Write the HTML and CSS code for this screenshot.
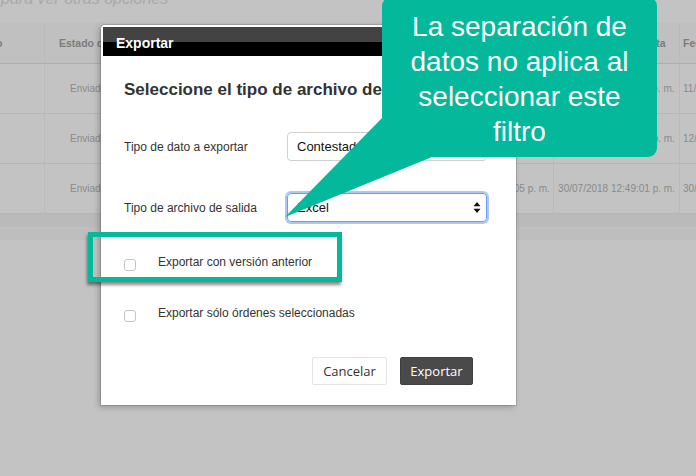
FILE: index.html
```html
<!DOCTYPE html>
<html lang="es">
<head>
<meta charset="utf-8">
<title>Exportar</title>
<link rel="stylesheet" href="styles.css">
</head>
<body>
<div class="page">
  <p class="hint">para ver otras opciones</p>
  <div class="grid">
    <div class="th c1"><span class="cut">o</span></div>
    <div class="th c2">Estado de la orden</div>
    <div class="th c3">Fecha de envío</div>
    <div class="th c4">Fecha de respuesta</div>
    <div class="th c5">Fecha</div>

    <div class="td c1"></div>
    <div class="td c2">Enviado</div>
    <div class="td c3">30/07/2018 11:02:15 p. m.</div>
    <div class="td c4">30/07/2018 11:05:40 p. m.</div>
    <div class="td c5">11/08/2018</div>

    <div class="td c1"></div>
    <div class="td c2">Enviado</div>
    <div class="td c3">30/07/2018 12:10:22 p. m.</div>
    <div class="td c4">30/07/2018 12:14:08 p. m.</div>
    <div class="td c5">12/08/2018</div>

    <div class="td c1"></div>
    <div class="td c2">Enviado</div>
    <div class="td c3">30/07/2018 12:49:05 p. m.</div>
    <div class="td c4">30/07/2018 12:49:01 p. m.</div>
    <div class="td c5">30/08/2018</div>
  </div>
  <div class="band"></div>
</div>

<div class="modal">
  <div class="modal-head">Exportar</div>
  <div class="modal-body">
    <h2 class="modal-title">Seleccione el tipo de archivo de exportación</h2>
    <div class="field first">
      <span class="field-label">Tipo de dato a exportar</span>
      <div class="select"><span>Contestadas</span></div>
    </div>
    <div class="field">
      <span class="field-label">Tipo de archivo de salida</span>
      <div class="select focus"><span>Excel</span>
        <svg class="arrows" width="8" height="11" viewBox="0 0 8 11"><path d="M4 0 L7.5 4.3 H0.5 Z M4 11 L7.5 6.7 H0.5 Z" fill="#111"/></svg>
      </div>
    </div>
    <div class="check first">
      <span class="box"></span>
      <span class="check-label">Exportar con versión anterior</span>
    </div>
    <div class="check">
      <span class="box"></span>
      <span class="check-label">Exportar sólo órdenes seleccionadas</span>
    </div>
    <div class="actions">
      <button class="btn btn-light">Cancelar</button>
      <button class="btn btn-dark">Exportar</button>
    </div>
  </div>
</div>

<svg class="tail" width="696" height="476" viewBox="0 0 696 476"><polygon points="384,116 285,217 432,157 452,128" fill="#03b89b"/></svg>
<div class="callout">La separación de<br>datos no aplica al<br>seleccionar este<br>filtro</div>
<div class="mark"></div>
</body>
</html>
```

FILE: styles.css
```css
html, body {
  margin: 0;
  padding: 0;
}
body {
  width: 696px;
  height: 476px;
  overflow: hidden;
  background: #c3c3c3;
  font-family: "Liberation Sans", Arial, sans-serif;
  position: relative;
}
.page {
  width: 696px;
}
.hint {
  margin: -9px 0 0;
  height: 32px;
  line-height: 16px;
  font-size: 16px;
  font-style: italic;
  color: #a9a9a9;
  padding-left: 1px;
}
.grid {
  display: grid;
  grid-template-columns: 45px 385px 124px 126px 80px;
  grid-template-rows: 41px 50px 50px 50px;
  width: 760px;
}
.th, .td {
  border-bottom: 1px solid #b6b6b6;
  border-right: 1px solid #bababa;
  display: flex;
  align-items: center;
  white-space: nowrap;
  overflow: hidden;
}
.th {
  background: #c0c0c0;
  font-weight: bold;
  font-size: 10.5px;
  color: #7c7c7c;
  border-bottom-color: #adadad;
}
.td {
  font-size: 10px;
  color: #8a8a8a;
}
.cut {
  margin-left: -4px;
}
.th.c2 { padding-left: 14px; }
.td.c2 { padding-left: 25px; }
.c3, .c4 { justify-content: center; }
.c5 { padding-left: 3px; }
.band {
  height: 26px;
  background: linear-gradient(#bababa 0 50%, #bebebe 50%);
}

.modal {
  position: absolute;
  left: 101px;
  top: 25px;
  width: 415px;
  height: 380px;
  box-sizing: border-box;
  background: #fff;
  border: 2px solid #fff;
  border-radius: 4px 4px 0 0;
  box-shadow: 0 0 0 1px rgba(0,0,0,0.12), -2px 2px 6px rgba(0,0,0,0.25);
}
.modal-head {
  height: 29px;
  box-sizing: border-box;
  padding: 3px 0 0 13px;
  display: flex;
  align-items: center;
  background: linear-gradient(#434343 0 50%, #000 50%);
  color: #fff;
  font-weight: bold;
  font-size: 14px;
}
.modal-body {
  padding: 24px 27px 0 21px;
}
.modal-title {
  margin: 0;
  font-size: 17px;
  line-height: 20px;
  font-weight: bold;
  color: #333;
  white-space: nowrap;
}
.field {
  display: flex;
  align-items: center;
  margin-top: 32px;
}
.field-label {
  width: 163px;
  flex-shrink: 0;
  font-size: 12px;
  color: #333;
}
.select {
  width: 200px;
  flex-shrink: 0;
  height: 29px;
  box-sizing: border-box;
  border: 1px solid #d0d0d0;
  border-radius: 4px;
  display: flex;
  align-items: center;
  padding: 0 5px 0 9px;
  font-size: 13px;
  color: #111;
}
.select.focus {
  border-color: #6d9cf0;
  box-shadow: 0 0 0 2px #aac8f6;
}
.arrows {
  margin-left: auto;
}
.check {
  display: flex;
  align-items: flex-start;
  margin-top: 32px;
}
.check + .check {
  margin-top: 34px;
}
.box {
  width: 12px;
  height: 12px;
  flex-shrink: 0;
  box-sizing: border-box;
  border: 1px solid #c4c4c4;
  border-radius: 3px;
  margin-top: 5px;
  margin-right: 22px;
  background: #fff;
}
.check-label {
  font-size: 12px;
  line-height: 16px;
  color: #333;
}
.actions {
  display: flex;
  justify-content: flex-end;
  gap: 13px;
  margin-top: 35px;
  margin-right: 14px;
}
.btn {
  height: 28px;
  padding: 0;
  font-family: "Open Sans", "Liberation Sans", sans-serif;
  font-size: 13px;
  border-radius: 2px;
  margin: 0;
}
.btn-light {
  width: 75px;
  background: #fff;
  border: 1px solid #e4e4e4;
  color: #333;
}
.btn-dark {
  width: 73px;
  background: #4a4a4a;
  border: 1px solid #404040;
  color: #fff;
}

.tail {
  position: absolute;
  left: 0;
  top: 0;
}
.callout {
  position: absolute;
  left: 382px;
  top: -3px;
  width: 275px;
  height: 160px;
  box-sizing: border-box;
  padding-top: 12px;
  background: #03b89b;
  border-radius: 9px;
  color: #fff;
  font-size: 28px;
  line-height: 35px;
  text-align: center;
}
.mark {
  position: absolute;
  left: 88px;
  top: 232px;
  width: 254px;
  height: 50px;
  box-sizing: border-box;
  border: 5px solid #03b89b;
  box-shadow: -1px 3px 3px rgba(0,0,0,0.45);
}
```
